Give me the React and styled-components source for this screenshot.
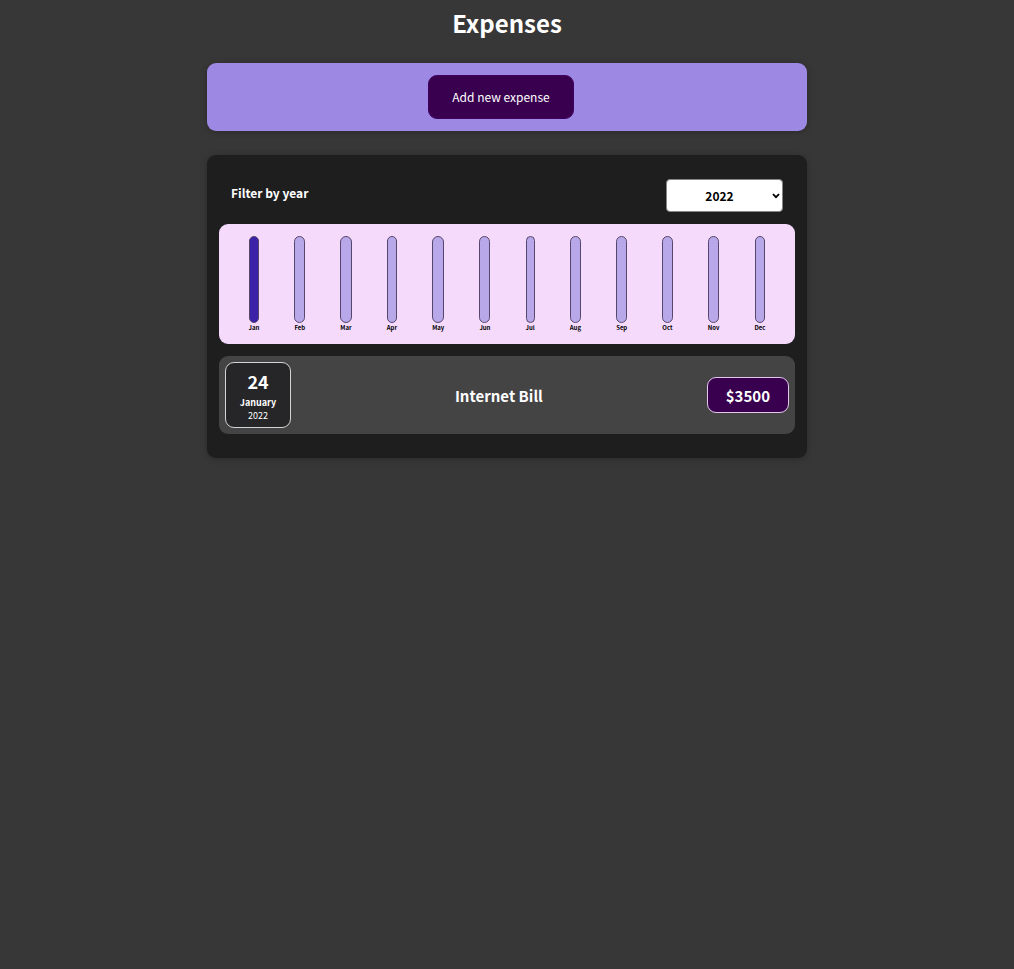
import React, { useState } from "react";
import styled, { createGlobalStyle } from "styled-components";

const GlobalStyle = createGlobalStyle`
  * { box-sizing: border-box; }
  body {
    margin: 0;
    min-height: 100vh;
    background: #383738;
    color: #fff;
    font-family: "Noto Sans CJK JP", "Noto Sans", sans-serif;
  }
`;

const Page = styled.main`
  display: flex;
  flex-direction: column;
  align-items: center;
  gap: 24px;
  padding: 6px 12px 24px;
`;

const Heading = styled.h1`
  margin: 0;
  font-size: 24px;
  line-height: 33px;
  font-weight: 700;
`;

const Panel = styled.section`
  width: 100%;
  max-width: 600px;
  border-radius: 9px;
  box-shadow: 0 1px 6px rgba(0, 0, 0, 0.25);
`;

const NewExpense = styled(Panel)`
  display: flex;
  justify-content: center;
  padding: 12px 24px 12px 12px;
  background: #9d88e3;
`;

const AddButton = styled.button`
  padding: 11px 23px;
  border: 1px solid #40005d;
  border-radius: 9px;
  background: #38004f;
  color: #fff;
  font: inherit;
  font-size: 12px;
  line-height: 20px;
  cursor: pointer;
`;

const Expenses = styled(Panel)`
  display: flex;
  flex-direction: column;
  gap: 12px;
  padding: 24px 12px;
  background: #1e1e1f;
`;

const Filter = styled.div`
  display: flex;
  justify-content: space-between;
  align-items: center;
  padding: 0 12px;
`;

const FilterLabel = styled.label`
  padding-bottom: 6px;
  font-size: 12px;
  line-height: 20px;
  font-weight: 700;
`;

const SelectWrap = styled.div`
  position: relative;
  display: flex;
`;

const YearSelect = styled.select`
  appearance: none;
  width: 117px;
  height: 33px;
  padding: 0 10px 0 0;
  border: 1px solid #858585;
  border-radius: 4px;
  background: #fff;
  color: #000;
  font: inherit;
  font-size: 12px;
  font-weight: 700;
  text-align: center;
  text-align-last: center;
`;

const Chevron = styled.svg`
  position: absolute;
  right: 3px;
  top: 14px;
  width: 8px;
  height: 6px;
  pointer-events: none;
`;

const Chart = styled.div`
  display: flex;
  justify-content: space-around;
  height: 120px;
  padding: 12px;
  border-radius: 9px;
  background: #f5dafc;
`;

const Month = styled.div`
  display: flex;
  flex-direction: column;
  align-items: center;
`;

const Bar = styled.div`
  width: 100%;
  flex: 1;
  border: 1px solid #57476b;
  border-radius: 9px;
  background: ${(p) => (p.$filled ? "#3b22a8" : "#b8a8e9")};
`;

const MonthLabel = styled.span`
  color: #000;
  font-size: 6px;
  line-height: 9px;
  font-weight: 700;
`;

const List = styled.ul`
  display: flex;
  flex-direction: column;
  gap: 12px;
  margin: 0;
  padding: 0;
  list-style: none;
`;

const Item = styled.li`
  display: flex;
  justify-content: space-between;
  align-items: center;
  padding: 6px;
  border-radius: 9px;
  background: #444445;
`;

const DateBox = styled.time`
  display: flex;
  flex-direction: column;
  align-items: center;
  justify-content: center;
  width: 66px;
  height: 66px;
  border: 1px solid #d4d4d4;
  border-radius: 9px;
  background: #262628;
  font-size: 9px;
  line-height: 13px;
`;

const Day = styled.span`
  padding-bottom: 2px;
  font-size: 18px;
  line-height: 26px;
  font-weight: 700;
`;

const MonthName = styled.span`
  font-weight: 700;
`;

const ItemTitle = styled.h2`
  margin: 0;
  padding-top: 2px;
  font-size: 15px;
  line-height: 24px;
  font-weight: 700;
`;

const Price = styled.div`
  padding: 6px 18px 4px;
  border: 1px solid #e4c8ee;
  border-radius: 9px;
  background: #38004f;
  font-size: 15px;
  line-height: 24px;
  font-weight: 700;
`;

const months = ["Jan", "Feb", "Mar", "Apr", "May", "Jun", "Jul", "Aug", "Sep", "Oct", "Nov", "Dec"];

const items = [
  { title: "Internet Bill", amount: 3500, day: 24, month: "January", year: "2022", iso: "2022-01-24" },
];

export default function App() {
  const [year, setYear] = useState("2022");
  const shown = items.filter((item) => item.year === year);

  return (
    <Page>
      <GlobalStyle />
      <Heading>Expenses</Heading>
      <NewExpense>
        <AddButton type="button">Add new expense</AddButton>
      </NewExpense>
      <Expenses>
        <Filter>
          <FilterLabel htmlFor="year">Filter by year</FilterLabel>
          <SelectWrap>
            <YearSelect id="year" value={year} onChange={(e) => setYear(e.target.value)}>
              <option value="2022">2022</option>
              <option value="2021">2021</option>
              <option value="2020">2020</option>
              <option value="2019">2019</option>
            </YearSelect>
            <Chevron viewBox="0 0 8 6" aria-hidden="true">
              <path d="M1 1.2 4 4.2 7 1.2" fill="none" stroke="#000" strokeWidth="1.8" />
            </Chevron>
          </SelectWrap>
        </Filter>
        <Chart>
          {months.map((name) => (
            <Month key={name}>
              <Bar $filled={shown.some((item) => item.month.startsWith(name))} />
              <MonthLabel>{name}</MonthLabel>
            </Month>
          ))}
        </Chart>
        <List>
          {shown.map((item) => (
            <Item key={item.iso}>
              <DateBox dateTime={item.iso}>
                <Day>{item.day}</Day>
                <MonthName>{item.month}</MonthName>
                <span>{item.year}</span>
              </DateBox>
              <ItemTitle>{item.title}</ItemTitle>
              <Price>${item.amount}</Price>
            </Item>
          ))}
        </List>
      </Expenses>
    </Page>
  );
}
